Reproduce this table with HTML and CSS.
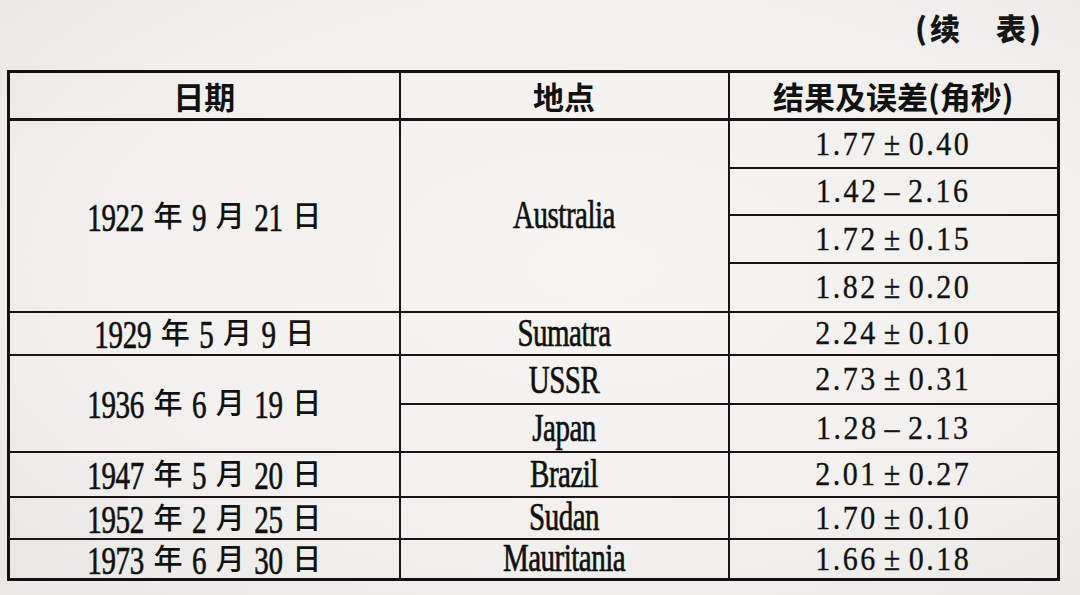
FILE: index.html
```html
<!DOCTYPE html>
<html lang="zh">
<head>
<meta charset="utf-8">
<title>续表</title>
<link rel="stylesheet" href="styles.css">
</head>
<body>
<div class="page">
  <div class="caption">(续　表)</div>
  <table class="data">
    <colgroup>
      <col class="c1"><col class="c2"><col class="c3">
    </colgroup>
    <thead>
      <tr class="h48"><th>日期</th><th>地点</th><th>结果及误差(角秒)</th></tr>
    </thead>
    <tbody>
      <tr class="h48">
        <td class="date" rowspan="4"><span class="n">1922</span> 年 <span class="n">9</span> 月 <span class="n">21</span> 日</td>
        <td class="place" rowspan="4"><span class="s">Australia</span></td>
        <td class="val"><span class="v">1.77 ± 0.40</span></td>
      </tr>
      <tr class="h47"><td class="val"><span class="v">1.42 – 2.16</span></td></tr>
      <tr class="h48"><td class="val"><span class="v">1.72 ± 0.15</span></td></tr>
      <tr class="h49"><td class="val"><span class="v">1.82 ± 0.20</span></td></tr>
      <tr class="h43">
        <td class="date"><span class="n">1929</span> 年 <span class="n">5</span> 月 <span class="n">9</span> 日</td>
        <td class="place"><span class="s">Sumatra</span></td>
        <td class="val"><span class="v">2.24 ± 0.10</span></td>
      </tr>
      <tr class="h49">
        <td class="date" rowspan="2"><span class="n">1936</span> 年 <span class="n">6</span> 月 <span class="n">19</span> 日</td>
        <td class="place low"><span class="s">USSR</span></td>
        <td class="val"><span class="v">2.73 ± 0.31</span></td>
      </tr>
      <tr class="h48">
        <td class="place low"><span class="s">Japan</span></td>
        <td class="val"><span class="v">1.28 – 2.13</span></td>
      </tr>
      <tr class="h45">
        <td class="date"><span class="n">1947</span> 年 <span class="n">5</span> 月 <span class="n">20</span> 日</td>
        <td class="place"><span class="s">Brazil</span></td>
        <td class="val"><span class="v">2.01 ± 0.27</span></td>
      </tr>
      <tr class="h42">
        <td class="date"><span class="n">1952</span> 年 <span class="n">2</span> 月 <span class="n">25</span> 日</td>
        <td class="place"><span class="s">Sudan</span></td>
        <td class="val"><span class="v">1.70 ± 0.10</span></td>
      </tr>
      <tr class="h41">
        <td class="date"><span class="n">1973</span> 年 <span class="n">6</span> 月 <span class="n">30</span> 日</td>
        <td class="place"><span class="s">Mauritania</span></td>
        <td class="val"><span class="v">1.66 ± 0.18</span></td>
      </tr>
    </tbody>
  </table>
</div>
</body>
</html>
```

FILE: styles.css
```css
html, body {
  margin: 0;
  padding: 0;
}
body {
  width: 1080px;
  height: 595px;
  overflow: hidden;
  background: radial-gradient(ellipse at 55% 45%, #f6f5f3 0%, #f1f0ee 60%, #e8e7e5 100%);
  color: #111;
}
.page {
  padding: 7px 0 0 7px;
}
.caption {
  font-family: "Noto Sans CJK SC", sans-serif;
  font-weight: 900;
  font-size: 30px;
  line-height: 40px;
  text-align: right;
  padding-right: 36px;
  letter-spacing: 3px;
  color: #151515;
}
.data {
  margin-top: 23px;
  border-collapse: collapse;
  width: 1050px;
  table-layout: fixed;
  border: 3px solid #111;
}
.c1 { width: 391px; }
.c2 { width: 329px; }
.c3 { width: 330px; }
.data th, .data td {
  border: 2px solid #151515;
  padding: 0;
  text-align: center;
  vertical-align: middle;
}
.data th {
  font-family: "Noto Sans CJK SC", sans-serif;
  font-weight: 700;
  font-size: 31px;
  line-height: 1;
  border-bottom-width: 3px;
}
.h48 { height: 48px; }
.h47 { height: 47px; }
.h49 { height: 49px; }
.h43 { height: 43px; }
.h45 { height: 45px; }
.h42 { height: 42px; }
.h41 { height: 41px; }

.date {
  font-family: "Noto Sans CJK SC", sans-serif;
  font-weight: 500;
  font-size: 29px;
  line-height: 1;
  word-spacing: 3px;
}
.n {
  display: inline-block;
  font-family: "Liberation Serif", serif;
  font-weight: 400;
  font-size: 29px;
  letter-spacing: -0.3px;
  -webkit-text-stroke: 0.5px #111;
  transform: scaleY(1.4);
}
.place {
  font-family: "Liberation Serif", serif;
  font-size: 29px;
  line-height: 1;
}
.s {
  display: inline-block;
  letter-spacing: -0.5px;
  -webkit-text-stroke: 0.5px #111;
  transform: scaleY(1.35);
}
.place.low {
  vertical-align: bottom;
  padding-bottom: 8px;
}
.val {
  font-family: "Liberation Serif", serif;
  font-size: 30px;
  letter-spacing: 2.5px;
  word-spacing: -4px;
  line-height: 1;
}
.v {
  display: inline-block;
  -webkit-text-stroke: 0.3px #111;
  transform: scaleY(1.1);
}
```
